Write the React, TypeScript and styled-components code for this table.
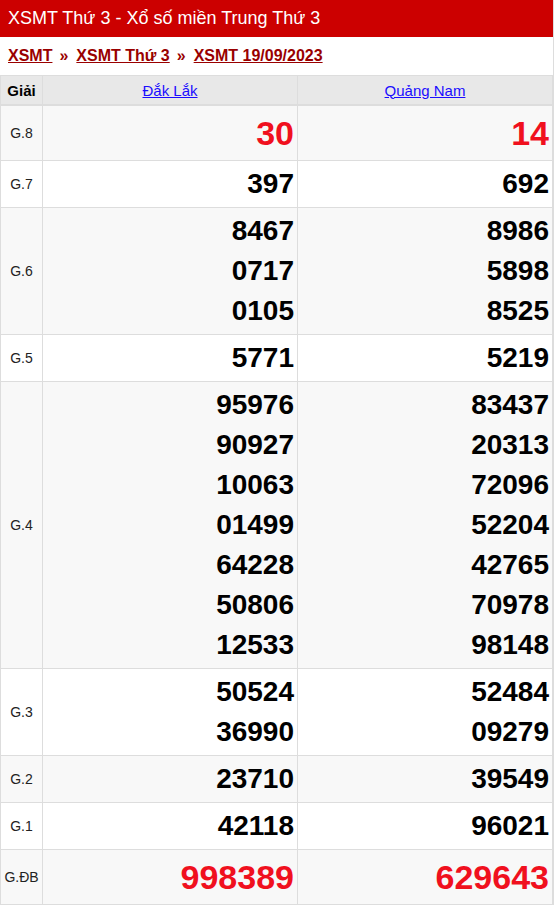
import styled, { createGlobalStyle } from 'styled-components';

const GlobalStyle = createGlobalStyle`
  body {
    margin: 0;
    background: #fff;
    font-family: "Liberation Sans", Arial, sans-serif;
  }
`;

interface Prize {
  label: string;
  dakLak: string[];
  quangNam: string[];
  big?: boolean;
}

const prizes: Prize[] = [
  { label: 'G.8', dakLak: ['30'], quangNam: ['14'], big: true },
  { label: 'G.7', dakLak: ['397'], quangNam: ['692'] },
  { label: 'G.6', dakLak: ['8467', '0717', '0105'], quangNam: ['8986', '5898', '8525'] },
  { label: 'G.5', dakLak: ['5771'], quangNam: ['5219'] },
  {
    label: 'G.4',
    dakLak: ['95976', '90927', '10063', '01499', '64228', '50806', '12533'],
    quangNam: ['83437', '20313', '72096', '52204', '42765', '70978', '98148'],
  },
  { label: 'G.3', dakLak: ['50524', '36990'], quangNam: ['52484', '09279'] },
  { label: 'G.2', dakLak: ['23710'], quangNam: ['39549'] },
  { label: 'G.1', dakLak: ['42118'], quangNam: ['96021'] },
  { label: 'G.ĐB', dakLak: ['998389'], quangNam: ['629643'], big: true },
];

export default function App() {
  return (
    <>
      <GlobalStyle />
      <Page>
        <Title>XSMT Thứ 3 - Xổ số miền Trung Thứ 3</Title>
        <Crumbs>
          <Crumb href="#">XSMT</Crumb>
          <Sep>»</Sep>
          <Crumb href="#">XSMT Thứ 3</Crumb>
          <Sep>»</Sep>
          <Crumb href="#">XSMT 19/09/2023</Crumb>
        </Crumbs>
        <Table>
          <colgroup>
            <col style={{ width: 42 }} />
            <col style={{ width: 255 }} />
            <col />
          </colgroup>
          <thead>
            <tr>
              <HeadCell>Giải</HeadCell>
              <HeadCell>
                <ProvinceLink href="#">Đắk Lắk</ProvinceLink>
              </HeadCell>
              <HeadCell>
                <ProvinceLink href="#">Quảng Nam</ProvinceLink>
              </HeadCell>
            </tr>
          </thead>
          <tbody>
            {prizes.map((p, i) => (
              <Row key={p.label} $odd={i % 2 === 0}>
                <LabelCell>{p.label}</LabelCell>
                <NumCell>
                  {p.dakLak.map((n) => (
                    <Num key={n} $big={p.big}>{n}</Num>
                  ))}
                </NumCell>
                <NumCell>
                  {p.quangNam.map((n) => (
                    <Num key={n} $big={p.big}>{n}</Num>
                  ))}
                </NumCell>
              </Row>
            ))}
          </tbody>
        </Table>
      </Page>
    </>
  );
}

const Page = styled.div`
  width: 554px;
  box-sizing: border-box;
  border-right: 1px solid #ddd;
`;

const Title = styled.h2`
  margin: 0;
  background: #cc0000;
  color: #fff;
  font-size: 18px;
  font-weight: normal;
  line-height: 37px;
  padding: 0 8px;
`;

const Crumbs = styled.div`
  display: flex;
  align-items: center;
  height: 38px;
  padding: 0 8px;
  font-size: 16px;
  font-weight: bold;
  color: #990000;
`;

const Crumb = styled.a`
  color: #990000;
  text-decoration: underline;
`;

const Sep = styled.span`
  padding: 0 8px 0 7px;
`;

const Table = styled.table`
  width: 100%;
  border-collapse: collapse;
  table-layout: fixed;
  border-left: 1px solid #ddd;
`;

const HeadCell = styled.th`
  background: #e8e8e8;
  border: 1px solid #ddd;
  border-bottom: 2px solid #ddd;
  height: 28px;
  padding: 0;
  font-size: 15px;
  font-weight: bold;
  color: #000;
  text-align: center;
`;

const ProvinceLink = styled.a`
  color: #1a0dff;
  font-weight: normal;
  text-decoration: underline;
`;

const Row = styled.tr<{ $odd: boolean }>`
  background: ${({ $odd }) => ($odd ? '#f8f8f8' : '#fff')};
`;

const LabelCell = styled.td`
  border: 1px solid #ddd;
  text-align: center;
  font-size: 14px;
  color: #222;
  padding: 0;
`;

const NumCell = styled.td`
  border: 1px solid #ddd;
  text-align: right;
  padding: 3px 3px 3px 0;
`;

const Num = styled.div<{ $big?: boolean }>`
  font-size: ${({ $big }) => ($big ? '34px' : '28px')};
  line-height: ${({ $big }) => ($big ? '48px' : '40px')};
  font-weight: bold;
  color: ${({ $big }) => ($big ? '#f0101e' : '#000')};
`;
